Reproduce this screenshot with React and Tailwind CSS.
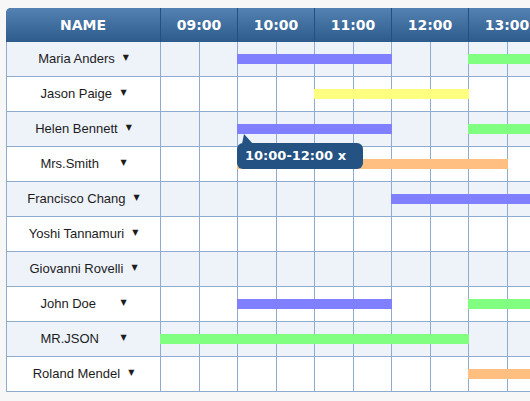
import React from 'react';

const HOURS = ['09:00', '10:00', '11:00', '12:00', '13:00', '14:00'];

const BAR = {
  purple: 'bg-[#8080ff]',
  green: 'bg-[#80ff80]',
  yellow: 'bg-[#ffff80]',
  orange: 'bg-[#ffbf80]',
};

const rows = [
  { name: 'Maria Anders', bars: [[10, 12, 'purple'], [13, 15, 'green']] },
  { name: 'Jason Paige', bars: [[11, 13, 'yellow']] },
  { name: 'Helen Bennett', bars: [[10, 12, 'purple'], [13, 15, 'green']] },
  { name: 'Mrs.Smith', bars: [[10, 13.5, 'orange']] },
  { name: 'Francisco Chang', bars: [[12, 15, 'purple']] },
  { name: 'Yoshi Tannamuri', bars: [] },
  { name: 'Giovanni Rovelli', bars: [] },
  { name: 'John Doe', bars: [[10, 12, 'purple'], [13, 15, 'green']] },
  { name: 'MR.JSON', bars: [[9, 13, 'green']] },
  { name: 'Roland Mendel', bars: [[13, 15, 'orange']] },
];

const HOUR_W = 77;
const NAME_W = 153;

const Row = ({ row, idx }) => {
  const bg = idx % 2 === 0 ? 'bg-[#eef3fa]' : 'bg-white';
  return (
    <div className="relative grid grid-cols-[153px_repeat(12,37.5px)] gap-x-px h-[34px]">
      <div className={`${bg} flex items-center justify-center`}>
        <div className="flex items-center gap-2 text-[13px] text-[#1c1c1c] font-['Liberation_Sans',Arial,sans-serif]">
          <span className="min-w-[72px] text-left whitespace-nowrap">{row.name}</span>
          <span className="text-[8px] leading-none font-['DejaVu_Sans',sans-serif] -mt-[2px]">▼</span>
        </div>
      </div>
      {Array.from({ length: 12 }).map((_, i) => (
        <div key={i} className={bg} />
      ))}

      {/* bars sit over the grid lines */}
      {row.bars.map(([start, end, color], i) => (
        <div
          key={i}
          className={`absolute top-[12px] h-[10px] ${BAR[color]}`}
          style={{ left: NAME_W + (start - 9) * HOUR_W, width: (end - start) * HOUR_W + 1 }}
        />
      ))}
    </div>
  );
};

export default function App() {
  return (
    <div className="w-[530px] h-[401px] overflow-hidden bg-[#f7f7f7] pt-2 pl-[6px]">
      <div className="w-max">
        {/* Header */}
        <div className="grid grid-cols-[154px_repeat(6,76px)] gap-x-px bg-[#24507f] rounded-tl-[5px] overflow-hidden h-[34px]">
          {['NAME', ...HOURS].map((h) => (
            <div
              key={h}
              className="flex items-center justify-center bg-gradient-to-b from-[#5382b3] to-[#2d5b8b] text-white text-[14px] font-bold font-['DejaVu_Sans',Verdana,sans-serif]"
            >
              {h}
            </div>
          ))}
        </div>

        {/* Body */}
        <div className="relative flex flex-col gap-y-px bg-[#8fabcf] border-l border-[#8fabcf] pb-px">
          {rows.map((row, i) => (
            <Row key={row.name} row={row} idx={i} />
          ))}

          {/* Tooltip */}
          <div className="absolute left-[230px] top-[101px] z-10">
            <svg className="absolute left-[5px] -top-[9px]" width="12" height="10" viewBox="0 0 12 10">
              <polygon points="2,0 0,10 11,10" fill="#235283" />
            </svg>
            <div className="h-[26px] w-[126px] rounded-[6px] bg-[#235283] flex items-center pl-[8px] text-white text-[13px] font-bold font-['DejaVu_Sans',Verdana,sans-serif]">
              10:00-12:00 x
            </div>
          </div>
        </div>
      </div>
    </div>
  );
}
